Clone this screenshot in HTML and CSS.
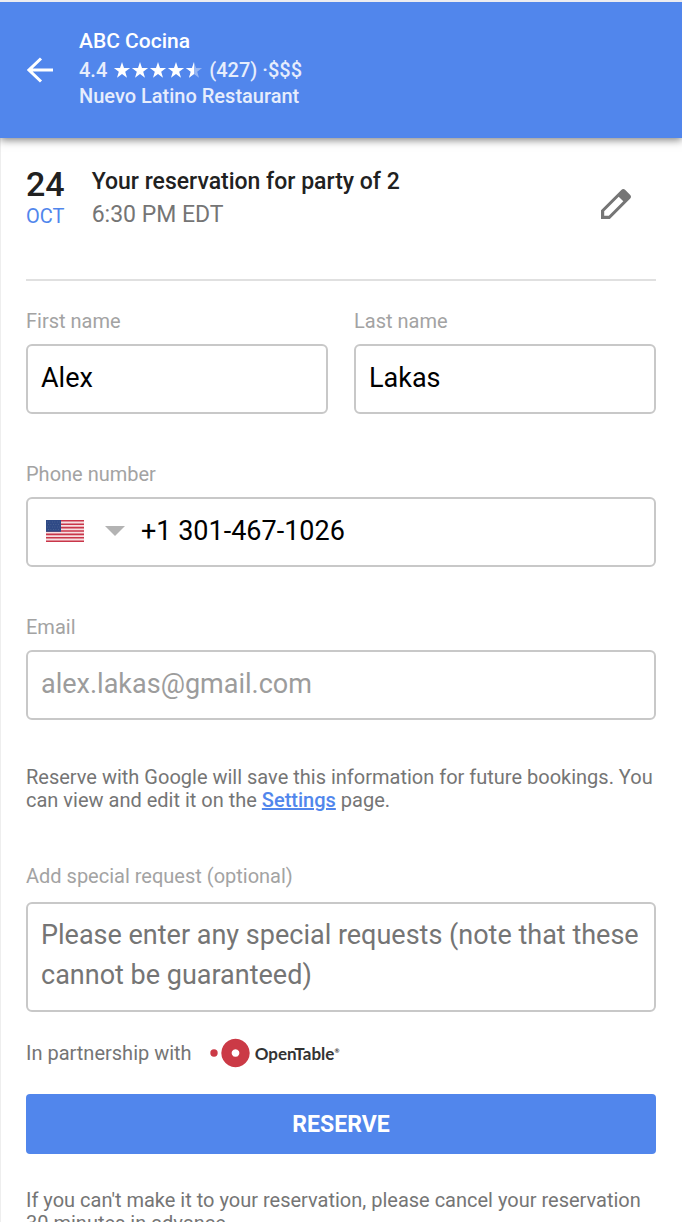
FILE: index.html
```html
<!DOCTYPE html>
<html lang="en">
<head>
<meta charset="utf-8">
<meta name="viewport" content="width=device-width, initial-scale=1">
<title>Reserve – ABC Cocina</title>
<link rel="stylesheet" href="styles.css">
</head>
<body>
<header class="app-bar">
  <button class="icon-button" type="button" aria-label="Back">
    <svg class="back-icon" viewBox="0 0 26 26"><path d="M26 13H2M14 1.5L2 13l12 11.500" fill="none" stroke="#fff" stroke-width="3"/></svg>
  </button>
  <div class="venue">
    <h1 class="venue-name">ABC Cocina</h1>
    <div class="venue-rating">
      <span>4.4</span>
      <svg class="stars" viewBox="0 0 90 18" role="img" aria-label="4.4 out of 5 stars">
        <defs>
          <path id="star" d="M9 1l2 5.900 6.100.1-4.900 3.700 1.800 6L9 13.100l-5 3.600 1.800-6L.9 7 7 6.900z"/>
          <clipPath id="left-half"><path d="M0 0h9v18H0z"/></clipPath>
        </defs>
        <g fill="#fff">
          <use href="#star"/><use href="#star" x="18"/><use href="#star" x="36"/><use href="#star" x="54"/>
          <g transform="translate(72 0)"><use href="#star" opacity=".4"/><use href="#star" clip-path="url(#left-half)"/></g>
        </g>
      </svg>
      <span>(427) ·$$$</span>
    </div>
    <div class="venue-type">Nuevo Latino Restaurant</div>
  </div>
</header>
<main class="content">
  <section class="booking">
    <div class="date"><span class="day">24</span><span class="month">OCT</span></div>
    <div class="details">
      <h2 class="booking-title">Your reservation for party of 2</h2>
      <div class="booking-time">6:30 PM EDT</div>
    </div>
    <button class="icon-button edit" type="button" aria-label="Edit reservation">
      <svg class="edit-icon" viewBox="0 0 30 30"><path fill="#757575" fill-rule="evenodd" d="M0 21.300L20.300 1q2-2 4 0L29 5.700q2 2 0 4L8.800 30H0zM3.200 22.300V26.800H7.800L22.300 12.200 17.700 7.700z"/></svg>
    </button>
  </section>
  <form class="form">
    <div class="name-row">
      <div class="field">
        <label class="label" for="first">First name</label>
        <input class="box" id="first" type="text" value="Alex">
      </div>
      <div class="field">
        <label class="label" for="last">Last name</label>
        <input class="box" id="last" type="text" value="Lakas">
      </div>
    </div>
    <div class="field">
      <label class="label" for="phone">Phone number</label>
      <div class="box phone-box">
        <button class="country" type="button" aria-label="Country: United States">
          <svg class="flag" viewBox="0 0 38 22"><path fill="#f6dfe1" d="M0 0h38v22H0z"/><path stroke="#c9364a" stroke-width="1.600" d="M0 .8h38M0 4.200h38M0 7.600h38M0 11h38M0 14.400h38M0 17.800h38M0 21.200h38"/><path fill="#2f4a86" d="M0 0h15v11.800H0z"/><path stroke="#64789f" stroke-width=".6" stroke-dasharray=".8 1.700" d="M1 2h13M2 4.500h12M1 7h13M2 9.500h12"/></svg>
          <svg class="caret" viewBox="0 0 20 10"><path fill="#b3b3b3" d="M0 0h20L10 10z"/></svg>
        </button>
        <input class="phone-input" id="phone" type="tel" value="+1 301-467-1026">
      </div>
    </div>
    <div class="field">
      <label class="label" for="email">Email</label>
      <input class="box email" id="email" type="email" value="alex.lakas@gmail.com">
    </div>
    <p class="note">Reserve with Google will save this information for future bookings. You can view and edit it on the <a class="link" href="#settings">Settings</a> page.</p>
    <div class="field request-field">
      <label class="label request-label" for="request">Add special request (optional)</label>
      <textarea class="box request" id="request" rows="2" placeholder="Please enter any special requests (note that these cannot be guaranteed)"></textarea>
    </div>
    <div class="partner">
      <span>In partnership with</span>
      <span class="brand">
        <svg class="brand-mark" viewBox="0 0 40 30"><g fill="#cb3a46"><circle cx="4" cy="15" r="3.700"/><path fill-rule="evenodd" d="M25.500.800a14.200 14.200 0 1 0 .01 0zM25.500 11.200a3.800 3.800 0 1 1-.01 0z"/></g></svg>
        <span class="brand-name">OpenTable<sup class="reg">®</sup></span>
      </span>
    </div>
    <button class="reserve" type="submit">RESERVE</button>
    <p class="cancel">If you can't make it to your reservation, please cancel your reservation 30 minutes in advance.</p>
  </form>
</main>
</body>
</html>
```
FILE: styles.css
```css
* { box-sizing: border-box; }
html { background: #fff; }
body {
  margin: 0;
  height: 100vh;
  overflow-x: hidden;
  overflow-y: auto;
  scrollbar-width: none;
  border-top: 2px solid #ececf0;
  box-shadow: inset 1px 0 #eee;
  font-family: Roboto, "Liberation Sans", sans-serif;
  font-size: 20px;
  line-height: 23px;
  color: #757575;
}
h1, h2, p { margin: 0; }
button, input, textarea { font: inherit; }
.icon-button { display: flex; padding: 0; border: 0; background: none; cursor: pointer; }
.app-bar {
  display: flex;
  align-items: center;
  gap: 26px;
  padding: 26px 26px 26px 27px;
  background: #5186ec;
  box-shadow: 0 2px 8px rgba(0, 0, 0, .5);
  color: #e6edfc;
  font-weight: 500;
}
.back-icon { width: 26px; height: 26px; }
.venue-name { font-size: 21px; line-height: 26px; font-weight: 500; color: #fff; }
.venue-rating { display: flex; align-items: center; gap: 6px; line-height: 32px; }
.venue-type { line-height: 20px; padding-bottom: 6px; }
.stars { width: 90px; height: 18px; }
.content { padding: 0 26px; }
.booking {
  display: flex;
  align-items: flex-start;
  gap: 27px;
  padding: 27px 0 48px;
  border-bottom: 2px solid #e0e0e0;
}
.date { display: flex; flex-direction: column; color: #212121; }
.day { font-size: 34px; line-height: 38px; font-weight: 500; }
.month { color: #5186ec; line-height: 26px; }
.details { flex: 1; font-size: 23px; }
.booking-title { font-size: 23px; line-height: 34px; font-weight: 500; color: #212121; }
.booking-time { line-height: 32px; }
.edit { margin: 24px 25px 0 0; }
.edit-icon { width: 30px; height: 30px; }
.form { display: flex; flex-direction: column; padding-top: 29px; }
.field { display: flex; flex-direction: column; flex: 1; min-width: 0; margin-bottom: 49px; }
.name-row { display: flex; gap: 26px; }
.label { margin-bottom: 11px; color: #a3a3a3; }
.box {
  width: 100%;
  height: 70px;
  padding: 0 13px 2px;
  border: 2px solid #c8c8c8;
  border-radius: 6px;
  background: #fff;
  color: #000;
  font-size: 27px;
}
.phone-box { display: flex; align-items: center; padding-left: 18px; }
.country { display: flex; align-items: center; gap: 21px; padding: 0; border: 0; background: none; }
.flag { width: 38px; height: 22px; }
.caret { width: 20px; height: 10px; }
.phone-input { flex: 1; min-width: 0; padding: 0 0 0 16px; border: 0; background: none; }
.email { color: #9c9c9c; }
.note { margin: -3px 0 53px; }
.link { color: #5186ec; font-weight: 500; }
.request-label { margin-bottom: 14px; }
.request { height: 110px; padding: 11px 13px; line-height: 40px; resize: none; overflow: hidden; display: block; }
.request::placeholder { color: #757575; }
.request-field { margin-bottom: 26px; }
.partner { display: flex; align-items: center; gap: 18px; height: 30px; margin-bottom: 26px; }
.brand { display: flex; align-items: center; gap: 5px; }
.brand-mark { width: 40px; height: 30px; }
.brand-name { font-family: Lato, sans-serif; font-size: 17px; font-weight: 700; color: #333; }
.reg { font-size: 6px; line-height: 0; }
.reserve {
  height: 60px;
  border: 0;
  border-radius: 4px;
  background: #5186ec;
  color: #fff;
  font-size: 23px;
  font-weight: 700;
}
.cancel { padding: 35px 0; }
```
